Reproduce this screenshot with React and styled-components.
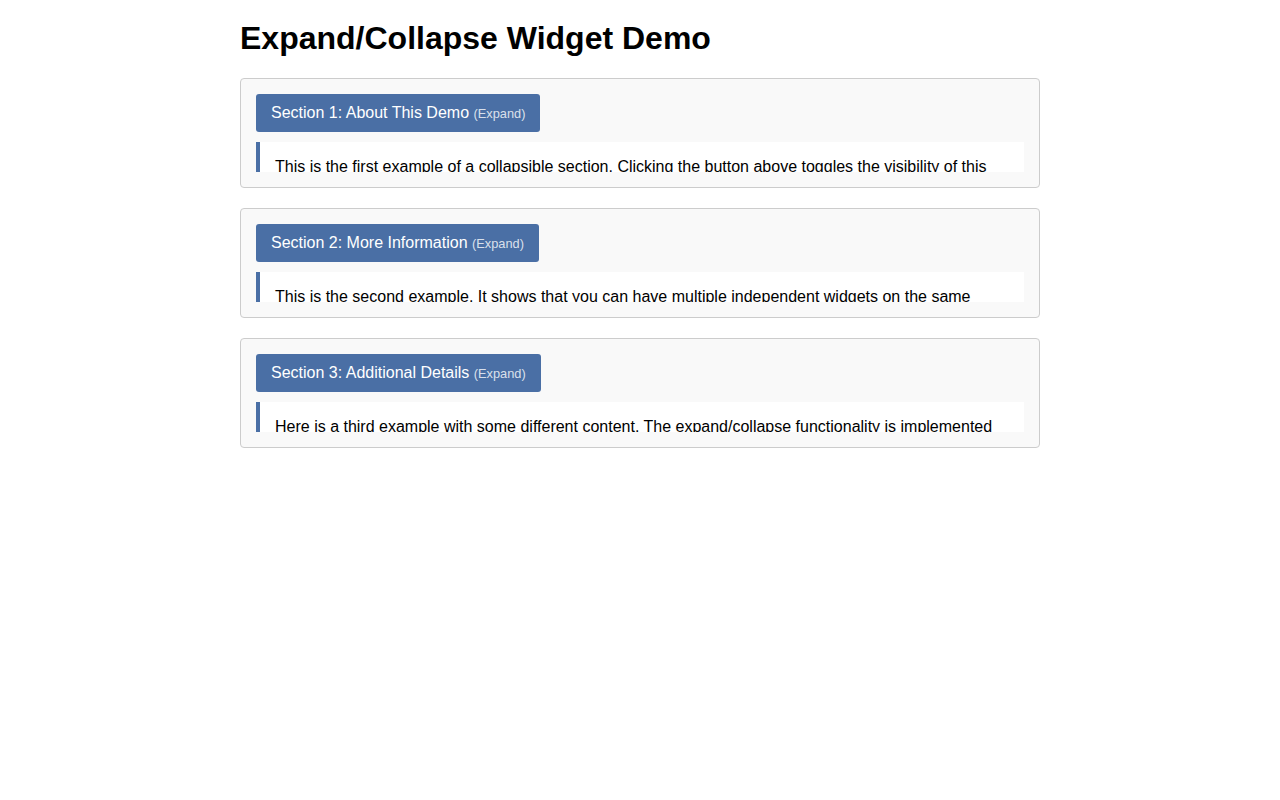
import React, { useState } from "react";
import styled, { createGlobalStyle } from "styled-components";

const GlobalStyle = createGlobalStyle`
  body {
    margin: 0;
    background: #fff;
    font-family: "Liberation Sans", Arial, Helvetica, sans-serif;
    color: #000;
  }
`;

const sections = [
  {
    id: 1,
    title: "Section 1: About This Demo",
    text: "This is the first example of a collapsible section. Clicking the button above toggles the visibility of this content. When expanded, the full text is shown; when collapsed, only a short preview remains visible.",
  },
  {
    id: 2,
    title: "Section 2: More Information",
    text: "This is the second example. It shows that you can have multiple independent widgets on the same page, each one keeping track of its own expanded or collapsed state.",
  },
  {
    id: 3,
    title: "Section 3: Additional Details",
    text: "Here is a third example with some different content. The expand/collapse functionality is implemented with a simple state toggle and a max-height transition on the content area.",
  },
];

const Section = ({ title, text }) => {
  const [open, setOpen] = useState(false);

  return (
    <Card>
      <Toggle onClick={() => setOpen(!open)}>
        {title} <Hint>({open ? "Collapse" : "Expand"})</Hint>
      </Toggle>
      <Content open={open}>
        <p>{text}</p>
      </Content>
    </Card>
  );
};

const App = () => {
  return (
    <>
      <GlobalStyle />
      <Page>
        <Title>Expand/Collapse Widget Demo</Title>
        {sections.map((s) => (
          <Section key={s.id} title={s.title} text={s.text} />
        ))}
      </Page>
    </>
  );
};

export default App;

const Page = styled.div`
  width: 800px;
  margin: 0 auto;
  padding: 20px 0;
  display: flex;
  flex-direction: column;
  gap: 20px;
`;

const Title = styled.h1`
  font-size: 32px;
  font-weight: bold;
  margin: 0 0 1px 0;
  line-height: 37px;
`;

const Card = styled.div`
  border: 1px solid #ccc;
  border-radius: 4px;
  background: #f9f9f9;
  padding: 15px;
  display: flex;
  flex-direction: column;
  align-items: flex-start;
  gap: 10px;
`;

const Toggle = styled.button`
  background: #4a6fa5;
  color: #fff;
  border: none;
  border-radius: 3px;
  height: 38px;
  padding: 0 15px;
  font-family: inherit;
  font-size: 16px;
  cursor: pointer;
`;

const Hint = styled.span`
  font-size: 0.8em;
  color: rgba(255, 255, 255, 0.8);
`;

const Content = styled.div`
  align-self: stretch;
  background: #fff;
  border-left: 4px solid #4a6fa5;
  padding: 0 15px;
  max-height: ${(p) => (p.open ? "500px" : "30px")};
  overflow: hidden;
  transition: max-height 0.3s;

  p {
    margin: 13px 0 10px;
    font-size: 16px;
    line-height: 24px;
  }
`;
